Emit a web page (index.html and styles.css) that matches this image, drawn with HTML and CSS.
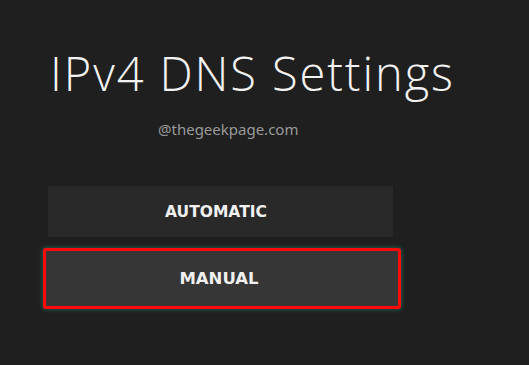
FILE: index.html
```html
<!DOCTYPE html>
<html>
<head>
<meta charset="utf-8">
<link rel="stylesheet" href="styles.css">
</head>
<body>
<main class="screen">
  <h1 class="title">IPv4 DNS Settings</h1>
  <p class="watermark">@thegeekpage.com</p>
  <div class="options">
    <div class="option">AUTOMATIC</div>
    <div class="option selected">MANUAL</div>
  </div>
</main>
</body>
</html>
```
FILE: styles.css
```css
html, body {
  margin: 0;
  padding: 0;
  background: #1f1f1f;
}
.screen {
  width: 529px;
  height: 365px;
  box-sizing: border-box;
  padding: 45px 0 0 0;
  display: flex;
  flex-direction: column;
  font-family: "Open Sans", sans-serif;
}
.title {
  margin: 0 0 0 50px;
  font-weight: 300;
  font-size: 47px;
  line-height: 56px;
  color: #f2f2f2;
  letter-spacing: 1.9px;
}
.watermark {
  margin: 18px 0 0 158px;
  font-family: "Noto Sans", sans-serif;
  font-size: 15px;
  line-height: 20px;
  color: #9a9a9a;
}
.options {
  margin: 47px 0 0 43px;
  width: 358px;
  display: flex;
  flex-direction: column;
  gap: 11px;
}
.option {
  height: 51px;
  margin: 0 8px 0 5px;
  background: #292929;
  color: #f0f0f0;
  font-family: "DejaVu Sans", sans-serif;
  font-weight: bold;
  font-size: 15.5px;
  display: flex;
  align-items: center;
  justify-content: center;
  padding-right: 9px;
}
.option.selected {
  margin: 0;
  height: 55px;
  border: 3px solid #ff0a0a;
  border-radius: 3px;
  background: #363636;
  box-shadow: 0 0 4px 1px rgba(40, 150, 120, 0.45);
  padding-right: 6px;
  font-size: 16.5px;
}
```
